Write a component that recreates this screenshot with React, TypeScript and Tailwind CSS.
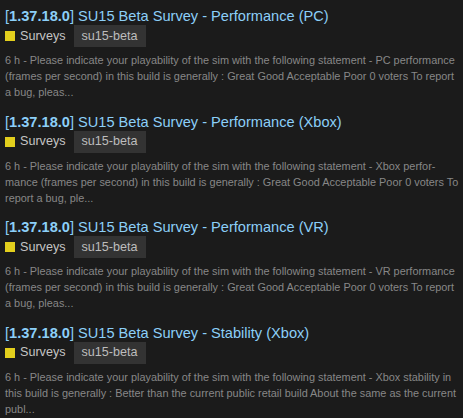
import React from "react";

type Item = { name: string; excerpt: string };

const items: Item[] = [
  {
    name: "SU15 Beta Survey - Performance (PC)",
    excerpt:
      "6 h - Please indicate your playability of the sim with the following statement - PC performance (frames per second) in this build is generally : Great Good Acceptable Poor 0 voters To report a bug, pleas...",
  },
  {
    name: "SU15 Beta Survey - Performance (Xbox)",
    excerpt:
      "6 h - Please indicate your playability of the sim with the following statement - Xbox perfor\u00ADmance (frames per second) in this build is generally : Great Good Acceptable Poor 0 voters To report a bug, ple...",
  },
  {
    name: "SU15 Beta Survey - Performance (VR)",
    excerpt:
      "6 h - Please indicate your playability of the sim with the following statement - VR performance (frames per second) in this build is generally : Great Good Acceptable Poor 0 voters To report a bug, pleas...",
  },
  {
    name: "SU15 Beta Survey - Stability (Xbox)",
    excerpt:
      "6 h - Please indicate your playability of the sim with the following statement - Xbox stability in this build is generally : Better than the current public retail build About the same as the current publ...",
  },
];

export default function App() {
  return (
    <div
      className="w-[463px] h-[418px] overflow-hidden bg-[#1b1b1b] pl-[5px] pr-0 pt-[7px]"
      style={{ fontFamily: '"Liberation Sans", Arial, sans-serif' }}
    >
      {items.map((it, i) => (
        <div key={i} className="mb-[12.5px]">
          <div className="text-[14.6px] leading-[18px] text-[#8ccff8] whitespace-nowrap">
            [<span className="font-bold">1.37.18.0</span>] {it.name}
          </div>
          <div className="flex items-center h-[22px]">
            <span className="w-[10px] h-[10px] bg-[#e3cf1d] mr-[5px]" />
            <span className="text-[12.6px] text-[#c4c4c4] mr-[8px]">Surveys</span>
            <span className="h-[22px] flex items-center px-[8px] bg-[#333333] text-[12.6px] text-[#bdbdbd]">
              su15-beta
            </span>
          </div>
          <p className="mt-[5px] text-[10.9px] leading-[16px] text-[#878787]">{it.excerpt}</p>
        </div>
      ))}
    </div>
  );
}
